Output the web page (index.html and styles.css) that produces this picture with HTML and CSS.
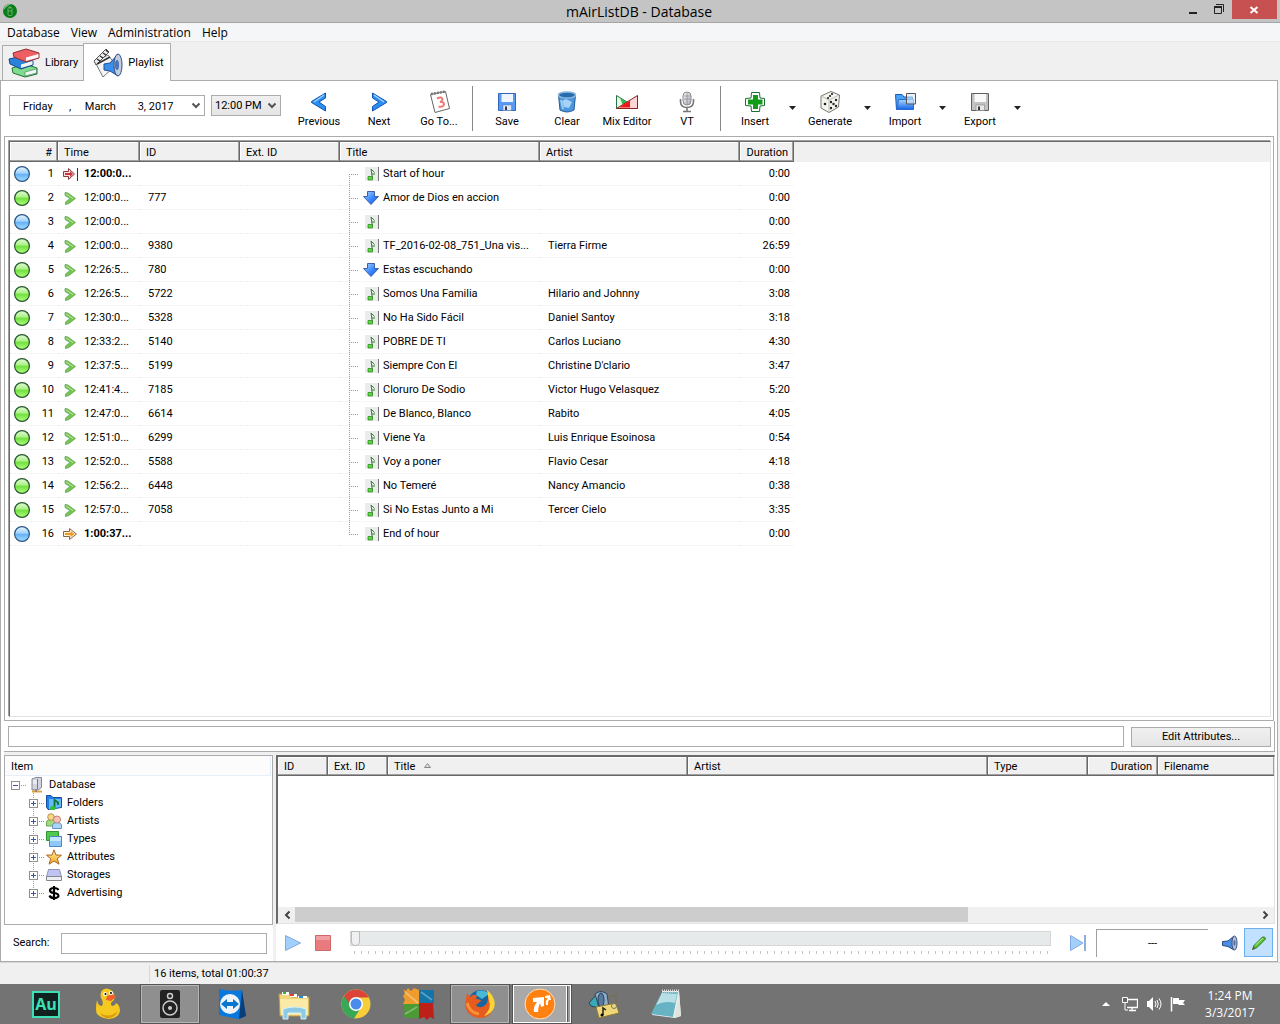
FILE: index.html
```html
<!DOCTYPE html>
<html lang="en">
<head>
    <meta charset="UTF-8">
    <meta name="viewport" content="width=device-width, initial-scale=1.0">
    <title>mAirListDB - Database</title>
    <link rel="stylesheet" href="styles.css">
</head>
<body>
    <svg class="sprite" aria-hidden="true">
        <defs>
            <linearGradient id="g-blue" x1="0" y1="0" x2="0" y2="1"><stop offset="0" stop-color="#a9d8ff"/><stop offset="1" stop-color="#1263e8"/></linearGradient>
            <linearGradient id="g-down" x1="0" y1="0" x2="1" y2="1"><stop offset="0" stop-color="#b9dcff"/><stop offset="0.5" stop-color="#3f8cff"/><stop offset="1" stop-color="#1250e0"/></linearGradient>
            <linearGradient id="g-ball-blue" x1="0" y1="0" x2="0" y2="1"><stop offset="0" stop-color="#e4f3ff"/><stop offset="0.45" stop-color="#a4d3fb"/><stop offset="0.5" stop-color="#62b0f8"/><stop offset="1" stop-color="#a6deff"/></linearGradient>
            <linearGradient id="g-ball-green" x1="0" y1="0" x2="0" y2="1"><stop offset="0" stop-color="#e2ffd2"/><stop offset="0.45" stop-color="#a9f084"/><stop offset="0.5" stop-color="#6fe03c"/><stop offset="1" stop-color="#b2ff7c"/></linearGradient>
            <linearGradient id="g-grey" x1="0" y1="0" x2="1" y2="1"><stop offset="0" stop-color="#ffffff"/><stop offset="1" stop-color="#a9abb8"/></linearGradient>
            <linearGradient id="g-gold" x1="0" y1="0" x2="0" y2="1"><stop offset="0" stop-color="#fff1a0"/><stop offset="1" stop-color="#f5a51c"/></linearGradient>
        </defs>

        <symbol id="ball-blue" viewBox="0 0 16 16"><circle cx="8" cy="8" r="7.400" fill="url(#g-ball-blue)" stroke="#2b5584" stroke-width="1.200"/></symbol>
        <symbol id="ball-green" viewBox="0 0 16 16"><circle cx="8" cy="8" r="7.400" fill="url(#g-ball-green)" stroke="#25582c" stroke-width="1.200"/></symbol>
        <symbol id="chevron" viewBox="0 0 16 16"><path d="M3 2.500L6 3 13.500 8.500 7 13.500 3.500 14.500V12L8 8.500 3 5.500Z" fill="#74c653" stroke="#69a455" stroke-width="0.800"/><path d="M4 4L11 8.500" stroke="#b9e6a5" fill="none"/></symbol>
        <symbol id="fixed" viewBox="0 0 16 16"><path d="M1.500 5.500H6.500V2.500L12.500 8 6.500 13.500V10.500H1.500Z" fill="#f8dede" stroke="#8c3a3e"/><path d="M3 7H8V5L11 8 8 11V9H3Z" fill="#c43a3e"/><path d="M15.500 2V15" stroke="#333"/></symbol>
        <symbol id="ending" viewBox="0 0 16 16"><path d="M1.500 5.500H7.500V2.500L14.500 8 7.500 13.500V10.500H1.500Z" fill="#fff1d8" stroke="#84684c"/><path d="M3 7H8.500V5L12.500 8 8.500 11V9H3Z" fill="#f09a1e"/></symbol>
        <symbol id="note" viewBox="0 0 16 16"><rect x="2" y="1" width="13" height="14" fill="#ececec"/><path d="M15.500 1V15" stroke="#777"/><path d="M9.500 12.500L8 3L11.500 6.500M8.500 8H12" stroke="#2d8433" fill="none"/><path d="M5 10.500H9.500V14H5Z" fill="#55dd2c" stroke="#287c2d" stroke-width="0.700"/></symbol>
        <symbol id="down" viewBox="0 0 16 16"><path d="M4.500 1.500H11.500V6.500H15.500L8 14.500 .5 6.500H4.500Z" fill="url(#g-down)" stroke="#3c5fae"/></symbol>
        <symbol id="branch-first" viewBox="0 0 10 24"><path d="M0 12.500H9M.5 12V24" stroke="#999" stroke-dasharray="1 1"/></symbol>
        <symbol id="branch-mid" viewBox="0 0 10 24"><path d="M0 12.500H9M.5 0V24" stroke="#999" stroke-dasharray="1 1"/></symbol>
        <symbol id="branch-last" viewBox="0 0 10 24"><path d="M0 12.500H9M.5 0V12" stroke="#999" stroke-dasharray="1 1"/></symbol>
        <symbol id="arrow-down" viewBox="0 0 10 8"><path d="M1.500 1.500L5 5 8.500 1.500" fill="none" stroke="#555" stroke-width="2"/></symbol>
        <symbol id="caret" viewBox="0 0 7 4"><path d="M0 0H7L3.500 4Z" fill="#222"/></symbol>
        <symbol id="disk" viewBox="0 0 24 24"><path d="M3.500 3.500H20.500V20.500H3.500Z" stroke="#3863bd"/><path d="M6.500 4H18V12H6.500Z" fill="#fff" opacity="0.900"/><path d="M8 15H16.500V20.500H8Z" fill="#dfe8f5" stroke="#5679ba" stroke-width="0.500"/><path d="M10 16.500H12V20H10Z" fill="#335"/></symbol>
    </svg>

    <header class="titlebar">
        <svg class="app-icon" viewBox="0 0 16 16"><circle cx="8" cy="8" r="7" fill="#087d18"/><path d="M1.500 7A7 7 0 0 1 9 1Q5 3 1.500 7Z" fill="#8bc890"/><rect x="6" y="4.500" width="4" height="8" rx="1" fill="none" stroke="#66ad6c"/><path d="M6 8H10M8 3V6" stroke="#66ad6c"/></svg>
        <h1>mAirListDB - Database</h1>
        <div class="window-buttons">
            <button class="win-btn" aria-label="Minimize"><svg viewBox="0 0 12 12"><path d="M2 9H10" stroke="#222" stroke-width="2"/></svg></button>
            <button class="win-btn" aria-label="Restore"><svg viewBox="0 0 12 12"><path d="M3 .5H10.500V8" fill="none" stroke="#222"/><path d="M1.500 3.500H8.500V9.500H1.500Z" fill="none" stroke="#222"/><path d="M1 3H9" stroke="#222" stroke-width="2"/></svg></button>
            <button class="win-btn close" aria-label="Close"><svg viewBox="0 0 12 12"><path d="M2.500 3L9.500 9M9.500 3L2.500 9" stroke="#fff" stroke-width="2"/></svg></button>
        </div>
    </header>

    <nav class="menubar">
        <button>Database</button>
        <button>View</button>
        <button>Administration</button>
        <button>Help</button>
    </nav>

    <div class="tabs" role="tablist">
        <button class="tab" role="tab" aria-selected="false">
            <svg viewBox="0 0 32 32"><path d="M4 21L17 17 29 21V27L17 30 5 26Z" fill="#7fdc8e" stroke="#23713c"/><path d="M17 25L28.500 22V26L17 29Z" fill="#f5f5f5" stroke="#23713c" stroke-width="0.500"/><path d="M1 12L14 9 25 14V18L13 22 2 17Z" fill="#2a83da" stroke="#1c4686"/><path d="M13 17.500L24.500 14V17.500L13 21Z" fill="#f5f5f5"/><path d="M5 6L18 2 31 6V11L18 15 6 10Z" fill="#ed5f63" stroke="#8e2c35"/><path d="M18 10.500L30.500 7V10.500L18 14Z" fill="#f8f8f8"/></svg>
            Library
        </button>
        <button class="tab active" role="tab" aria-selected="true">
            <svg viewBox="0 0 32 32"><path d="M3 15L16 8 24 18 11 30Z" fill="#f4f4f4" stroke="#777"/><path d="M2 14L14 2 17 5 4 18Z" fill="#eee" stroke="#555"/><path d="M5 12L8 14M8 9L11 11M11 6L14 8M14 3L16 5M5 17L18 10" stroke="#333" stroke-width="1.500"/><path d="M12 17L18 16 26 7V29L18 24 12 23Z" fill="#3b8fec" stroke="#234f94"/><ellipse cx="26" cy="18" rx="4" ry="11" fill="#c3cddd" stroke="#31528c"/><ellipse cx="25" cy="18" rx="2" ry="5" fill="#4974b5"/></svg>
            Playlist
        </button>
    </div>

    <main class="page">
        <div class="toolbar">
            <div class="picker date">
                <input type="text" aria-label="Date" value="Friday      ,     March        3, 2017">
                <svg><use href="#arrow-down"/></svg>
            </div>
            <div class="picker hour">
                <select aria-label="Hour"><option>12:00 PM</option></select>
                <svg><use href="#arrow-down"/></svg>
            </div>
            <button class="tool"><svg viewBox="0 0 24 24"><path d="M18.500 3V8L12 12 18.500 16.500V21L4.500 12.500V11.500Z" fill="#298ff0" stroke="#1353b6"/><path d="M17 5L7 12" stroke="#9bd0ff" stroke-width="1.500"/></svg>Previous</button>
            <button class="tool"><svg viewBox="0 0 24 24"><path d="M5.500 3V8L12 12 5.500 16.500V21L19.500 12.500V11.500Z" fill="#298ff0" stroke="#1353b6"/><path d="M7 5L17 12" stroke="#9bd0ff" stroke-width="1.500"/></svg>Next</button>
            <button class="tool"><svg viewBox="0 0 24 24"><path d="M3.500 4.500L18.500 1.500 22.500 18.500 8 22.500Z" fill="#fff" stroke="#666"/><path d="M4 4L18.500 1.500" stroke="#777" stroke-width="2.500" stroke-dasharray="2 1"/><path d="M10 8.500Q15 6 15.500 9.500 15 11.500 13 12 17 11.500 17 14.500 16 17.500 11.500 16.500" fill="none" stroke="#f07870" stroke-width="2"/></svg>Go To...</button>
            <span class="sep"></span>
            <button class="tool"><svg viewBox="0 0 24 24" fill="#559bf1"><use href="#disk"/></svg>Save</button>
            <button class="tool"><svg viewBox="0 0 24 24"><path d="M3.500 5L5 20Q12 24 19 20L20.500 5Z" fill="#4b96dc" stroke="#255b9c"/><ellipse cx="12" cy="5" rx="8.500" ry="3" fill="#266cae" stroke="#8cb7dc" stroke-width="1.500"/><path d="M7 11L11 9 17 12 14 18 9 17Z" fill="#a5d2f6"/><path d="M6 10L8 19" stroke="#9ccaf0" stroke-width="2"/></svg>Clear</button>
            <button class="tool"><svg viewBox="0 0 24 24"><path d="M1.500 5.500L22.500 18.500H1.500Z" fill="#e8f8e8" stroke="#267443"/><path d="M5 8L12 12 9 18Z" fill="#31b64b"/><path d="M22.500 5.500V18.500H1.500Z" fill="#ffd6d6" stroke="#8b2020"/><path d="M4 17.500L15 10.500V17.500Z" fill="#f01616"/></svg>Mix Editor</button>
            <button class="tool"><svg viewBox="0 0 24 24"><rect x="8" y="2" width="8" height="13" rx="4" fill="url(#g-grey)" stroke="#888"/><path d="M9 6H15M9 9H15M12 3V14" stroke="#888" stroke-width="0.700"/><path d="M5.500 9V12Q6 17.500 12 17.500 18 17.500 18.500 12V9M12 18V21M8 21.500H16" fill="none" stroke="#777" stroke-width="1.600"/></svg>VT</button>
            <span class="sep"></span>
            <button class="tool"><svg viewBox="0 0 24 24"><path d="M8.500 2.500H16.500L17 8 21.500 8.500V15.500L17 16 16.500 21.500H8.500L8 16 2.500 15.500V8.500L8 8Z" fill="#fff" stroke="#1b7036"/><path d="M10 5H15V9.500H19.500V14.500H15V19H10V14.500H5V9.500H10Z" fill="#129b17"/></svg>Insert</button>
            <button class="more" aria-label="Insert options"><svg><use href="#caret"/></svg></button>
            <button class="tool"><svg viewBox="0 0 24 24"><path d="M13 1.500L21.500 5 20.500 17 11 22.500 3 18V6Z" fill="#f5f5ee" stroke="#777"/><path d="M3 6L11 10 21 5M11 10V22" fill="none" stroke="#bbb"/><g fill="#222"><circle cx="14" cy="4" r="1.100"/><circle cx="12" cy="6" r="1.100"/><circle cx="10" cy="8" r="1.100"/><circle cx="7" cy="14" r="1.300"/><circle cx="13" cy="12" r="1.200"/><circle cx="18" cy="10" r="1.200"/><circle cx="15.500" cy="14" r="1.200"/><circle cx="13" cy="18" r="1.200"/><circle cx="18" cy="16" r="1.200"/></g></svg>Generate</button>
            <button class="more" aria-label="Generate options"><svg><use href="#caret"/></svg></button>
            <button class="tool"><svg viewBox="0 0 24 24"><path d="M2.500 4.500H9L11 7H19.500V19.500H3.500Z" fill="#4ba4f5" stroke="#1959be"/><path d="M5.500 9.500H20.500V19.500H4Z" fill="url(#g-blue)" stroke="#2b6bcb"/><path d="M13.500 3.500H22.500V14H13.500Z" fill="#d9e9fa" fill-opacity="0.600" stroke="#555"/></svg>Import</button>
            <button class="more" aria-label="Import options"><svg><use href="#caret"/></svg></button>
            <button class="tool"><svg class="grey" viewBox="0 0 24 24" fill="#c0c2cc"><use href="#disk"/></svg>Export</button>
            <button class="more" aria-label="Export options"><svg><use href="#caret"/></svg></button>
        </div>

        <section class="playlist">
            <div class="list-frame">
                <table class="tracks">
                    <colgroup><col class="c-num"><col class="c-time"><col class="c-id"><col class="c-id"><col class="c-text"><col class="c-text"><col class="c-dur"><col></colgroup>
                    <thead>
                        <tr><th class="right">#</th><th>Time</th><th>ID</th><th>Ext. ID</th><th>Title</th><th>Artist</th><th class="right">Duration</th><td></td></tr>
                    </thead>
                    <tbody id="tracks"></tbody>
                </table>
            </div>
        </section>

        <div class="attributes">
            <input type="text" aria-label="Attributes">
            <button>Edit Attributes...</button>
        </div>

        <div class="browser">
            <aside class="left">
                <div class="tree">
                    <div class="tree-head">Item</div>
                    <ul>
                        <li class="root"><button class="toggle" aria-label="Collapse"></button><span class="dots"></span>
                            <svg viewBox="0 0 16 16"><path d="M4 2L8 0.500H13.500V10.500L10 13H4Z" fill="#d2d4df" stroke="#858794"/><path d="M9.500 2V12" stroke="#777"/><path d="M5 4H9M5 6H9" stroke="#fff"/><path d="M4 14.500H14" stroke="#e4a542" stroke-width="2"/><path d="M8 12V15" stroke="#888" stroke-width="2"/></svg>Database</li>
                        <li><button class="toggle plus" aria-label="Expand"></button><span class="dots"></span>
                            <svg viewBox="0 0 16 16"><path d="M.5 .5H5L7 2.500H15.500V12.500L2 14.500.5 12Z" fill="#2180e4" stroke="#124e9c"/><path d="M3 4H15V12L3 14Z" fill="#64b9ff"/><path d="M8.500 13V5L12 7.500V10" fill="none" stroke="#12752a" stroke-width="1.800"/><ellipse cx="7" cy="13" rx="2.800" ry="2" fill="#30c22d"/></svg>Folders</li>
                        <li><button class="toggle plus" aria-label="Expand"></button><span class="dots"></span>
                            <svg viewBox="0 0 16 16"><path d="M.5 13V9Q1 6.500 5 6.500T9 9V13Z" fill="#9ddc7e" stroke="#6aa754"/><circle cx="5" cy="4" r="3.300" fill="#f9d886" stroke="#bb914b"/><path d="M6.500 15.500V12Q7 9.500 11 9.500T15.500 12V15.500Z" fill="#a8d5fa" stroke="#6594c6"/><circle cx="11" cy="6.500" r="3.500" fill="#f9c2b5" stroke="#c67f75"/></svg>Artists</li>
                        <li><button class="toggle plus" aria-label="Expand"></button><span class="dots"></span>
                            <svg viewBox="0 0 16 16"><path d="M.5 .5H12.500V9.500H.5Z" fill="#50c94e" stroke="#319337"/><path d="M3.500 5.500H15.500V15.500H3.500Z" fill="#8fc8f7" stroke="#4c88bf"/><path d="M4 6H15V10H4Z" fill="#c5e5ff"/></svg>Types</li>
                        <li><button class="toggle plus" aria-label="Expand"></button><span class="dots"></span>
                            <svg viewBox="0 0 16 16"><path d="M8 .8L10 6 15.500 6.200 11.300 9.700 13 15.200 8 12 3 15.200 4.700 9.700.5 6.200 6 6Z" fill="url(#g-gold)" stroke="#a96528"/></svg>Attributes</li>
                        <li><button class="toggle plus" aria-label="Expand"></button><span class="dots"></span>
                            <svg viewBox="0 0 16 16"><path d="M2.500 2.500H13.500L15.500 10H.5Z" fill="#bfc4f3" stroke="#8f93b8"/><path d="M.5 9.500H15.500V13.500H.5Z" fill="#eeeef2" stroke="#85868e"/></svg>Storages</li>
                        <li><button class="toggle plus" aria-label="Expand"></button><span class="dots"></span>
                            <svg viewBox="0 0 16 16"><path d="M12.500 5Q11.500 3 8 3 4 3 4 5.500 4 7.500 8 8 12.500 8.500 12.500 11 12 13 8 13 4.500 13 3.500 10.500M8 1V15" fill="none" stroke="#000" stroke-width="2.200"/></svg>Advertising</li>
                    </ul>
                </div>
                <div class="search">
                    <label for="search">Search:</label>
                    <input type="text" id="search">
                </div>
            </aside>

            <section class="right-pane">
                <div class="results">
                    <table class="library">
                        <colgroup><col class="l-id"><col class="l-ext"><col class="l-text"><col class="l-text"><col class="c-id"><col class="l-dur"><col></colgroup>
                        <thead>
                            <tr><th>ID</th><th>Ext. ID</th><th>Title <svg class="sort" viewBox="0 0 7 5"><path d="M3.500 .5L6.500 4.500H.5Z" fill="#ddd" stroke="#888"/></svg></th><th>Artist</th><th>Type</th><th class="right">Duration</th><th>Filename</th></tr>
                        </thead>
                    </table>
                    <div class="scrollbar">
                        <button aria-label="Scroll left"><svg viewBox="0 0 8 10"><path d="M6.500 1.500L3 5 6.500 8.500" fill="none" stroke="#444" stroke-width="2"/></svg></button>
                        <div class="scroll-track"><div class="scroll-thumb"></div></div>
                        <button aria-label="Scroll right"><svg viewBox="0 0 8 10"><path d="M1.500 1.500L5 5 1.500 8.500" fill="none" stroke="#444" stroke-width="2"/></svg></button>
                    </div>
                </div>
                <div class="player">
                    <button aria-label="Play"><svg viewBox="0 0 16 16"><path d="M.5 .5L15.500 8 .5 15.500Z" fill="#a2d0fc" stroke="#80a9e2"/></svg></button>
                    <button aria-label="Stop"><svg viewBox="0 0 16 16"><path d="M.5 .5H15.500V15.500H.5Z" fill="#e97a7e" stroke="#d0676a"/><path d="M1 1H15V5H1Z" fill="#f0a0a2"/></svg></button>
                    <div class="seek">
                        <input type="range" min="0" max="100" value="0" aria-label="Position">
                        <div class="ticks"></div>
                    </div>
                    <button aria-label="Skip to end"><svg viewBox="0 0 16 16"><path d="M.5 .5L13 8 .5 15.500Z" fill="#a2d0fc" stroke="#80a9e2"/><path d="M15 0V16" stroke="#8daed8" stroke-width="2"/></svg></button>
                    <output class="time-left">---</output>
                    <button class="speaker" aria-label="Cue output"><svg viewBox="0 0 16 16"><path d="M.5 6.500L6 6 12 1V15L6 11.500.5 10.500Z" fill="#4b8de0" stroke="#264c88"/><ellipse cx="12.500" cy="8" rx="2.500" ry="7" fill="#b5c2d6" stroke="#3c4f78"/><ellipse cx="12.500" cy="8" rx="1" ry="3" fill="#476ba8"/></svg></button>
                    <button class="edit" aria-label="Edit mode"><svg viewBox="0 0 16 16"><path d="M1.500 14.500L3 10.500 11.500 2Q14.500 1.500 14.500 4L6 12.500Z" fill="#5bc934" stroke="#2f7224"/><path d="M4.500 10L12 3" stroke="#c1f29a"/><path d="M1.500 14.500L2.500 11.500 4.500 13.500Z" fill="#654"/></svg></button>
                </div>
            </section>
        </div>
    </main>

    <div class="statusbar"><span class="panel"></span><span>16 items, total 01:00:37</span></div>

    <footer class="taskbar">
        <button class="task" aria-label="Audition"><span class="au">Au</span></button>
        <button class="task" aria-label="Cyberduck"><svg viewBox="0 0 32 32"><path d="M5 12Q3 22 5 26 10 31 17 31 27 30 28 23 28 17 24 15 23 18 20 18 17 15 22 12 24 2 15 .5 7 1 9 10 12 14 10 18 6 18 5 12Z" fill="#f5c91f"/><path d="M8 25Q17 31 26 23 22 31 15 30 10 29 8 25Z" fill="#d89c10"/><path d="M15 8L21 6 24 9 19 13 14 12Z" fill="#f0622a"/><circle cx="13" cy="6" r="2" fill="#fff"/><circle cx="19" cy="5" r="2" fill="#fff"/><circle cx="13.500" cy="6" r="1"/><circle cx="19" cy="5" r="1"/></svg></button>
        <button class="task open" aria-label="mAirList"><svg viewBox="0 0 32 32"><rect x="6" y="2" width="20" height="28" rx="2" fill="#222"/><g fill="none" stroke="#ccc" stroke-width="1.500"><circle cx="16" cy="8" r="2.500"/><circle cx="16" cy="20" r="7"/></g><circle cx="16" cy="20" r="2" fill="#ccc"/></svg></button>
        <button class="task" aria-label="TeamViewer"><svg viewBox="0 0 32 32"><path d="M3 1Q15 4 26 2L28 29 22 31 3 27Z" fill="#0878dc"/><path d="M26 2L30 28 23 31Z" fill="#0b3d77"/><circle cx="14" cy="16" r="10" fill="#edf3f9"/><path d="M5 16L11 11V14H17V11L23 16 17 21V18H11V21Z" fill="#0876cf"/></svg></button>
        <button class="task" aria-label="File Explorer"><svg viewBox="0 0 32 32"><path d="M1 6H11L13 9H31V28H2Z" fill="#f2d77a" stroke="#bc9642"/><path d="M4 4H11V7H4ZM12 6H19V9H12ZM20 8H29V10H20Z" fill="#fff"/><path d="M5 4H8V6H5Z" fill="#38b92c"/><path d="M12 6H16V8H12Z" fill="#dc4232"/><path d="M21 8H25V10H21Z" fill="#248dde"/><path d="M2 11H30V27H3Z" fill="#fbeaa7"/><path d="M5 31V21Q17 17 28 21V31H23V25H10V31Z" fill="#8cc9e5" stroke="#d6f2fc"/></svg></button>
        <button class="task" aria-label="Chrome"><svg viewBox="0 0 32 32"><circle cx="16" cy="16" r="14.500" fill="#f8cd3a"/><path d="M16 16L4 8A14.500 14.500 0 0 0 14 30.500L22 18Z" fill="#38a756"/><path d="M16 16H10L4 8A14.500 14.500 0 0 1 29 9.500H16Z" fill="#db4437"/><circle cx="16" cy="16" r="7" fill="#fff"/><circle cx="16" cy="16" r="5.500" fill="#4a8bec"/></svg></button>
        <button class="task" aria-label="AVG"><svg viewBox="0 0 32 32"><path d="M1 1L4 3 6 0 9 3 12 0 17 2V16H1L3 12 1 8 3 5Z" fill="#ef9c2c"/><path d="M17 2H32V15H17Z" fill="#1274a9"/><path d="M1 16H18V30H4L1 27 3 24Z" fill="#4b9a35"/><path d="M17 15H31L32 31 28 29 25 32 22 29 17 31Z" fill="#bd2018"/><path d="M3 4L16 15M19 4L30 12M3 26L15 19" stroke="#ffffff" stroke-opacity="0.300" stroke-width="2"/></svg></button>
        <button class="task open" aria-label="Firefox"><svg viewBox="0 0 32 32"><circle cx="17" cy="15" r="13" fill="#17659f"/><path d="M13 3Q21 1 25 6L18 11 12 7Z" fill="#4ab9d9"/><path d="M3 5L6 9Q10 5 13 8L12 11Q17 11 17 13L12 17Q15 21 20 18 25 15 24 7 31 12 30 19 26 31 15 30 2 28 1 16Z" fill="#e65c20"/><path d="M23 2Q33 10 30 20 27 26 20 28 28 20 25 13Z" fill="#fbd435"/><path d="M3 15Q6 25 15 26" stroke="#f59236" stroke-width="3" fill="none"/></svg></button>
        <button class="task open current" aria-label="mAirListDB"><svg viewBox="0 0 32 32"><circle cx="16" cy="16" r="15" fill="#ff8111" stroke="#ffe0bd"/><path d="M9 10L20 9 20 18 17 19 16 15Q14 19 14 24L10 24Q9 19 13 14L9 14Z" fill="#fff"/><path d="M21 8L26 7 27 12 25 12Q23 14 24 17L22 17Q21 13 24 10L21 10Z" fill="#fff"/></svg></button>
        <button class="task" aria-label="Audio tagger"><svg viewBox="0 0 32 32"><path d="M1 15L8 7 11 20 3 18Z" fill="#38a9b6" stroke="#254853"/><path d="M7 6Q13 1 19 6L21 20 12 22Z" fill="#91adc4" stroke="#304864"/><ellipse cx="13" cy="12" rx="3" ry="7" fill="#56799f" stroke="#263f5d"/><path d="M8 19L28 15 31 25 11 30Z" fill="#efd779" stroke="#8c7734"/><path d="M15 27V20L18 22" fill="none" stroke="#222" stroke-width="1.500"/><circle cx="14" cy="27" r="1.500"/><circle cx="26" cy="18" r="2.500" fill="none" stroke="#777"/><path d="M21 9L28 7V16" fill="none" stroke="#786d32" stroke-dasharray="2 1"/></svg></button>
        <button class="task" aria-label="Notepad"><svg viewBox="0 0 32 32"><path d="M13 3H29L31 28 25 30 2 27Z" fill="#eaf3f5"/><path d="M12 4H28L23 29 1 26Z" fill="#67b3c4"/><path d="M12 5L27 6 25 15Q15 12 6 17Z" fill="#b9dfe6"/><path d="M29 4L31 28 24 30Z" fill="#e1e4dd"/><path d="M12 3H29" stroke="#ddd" stroke-width="3" stroke-dasharray="1 1"/></svg></button>
        <div class="tray">
            <svg viewBox="0 0 16 16"><path d="M4 10L8 6 12 10Z" fill="#fff"/></svg>
            <svg viewBox="0 0 16 16"><path d="M5 3.500H15.500V11.500H5M10 12V14M7 14.500H14" fill="none" stroke="#fff" stroke-width="1.300"/><path d="M.5 1.500H5.500V6.500H.5ZM3 7V14H6" fill="#666" stroke="#fff"/></svg>
            <svg viewBox="0 0 16 16"><path d="M1 5H3L7 1V15L3 11H1Z" fill="#fff"/><path d="M9 5Q11 8 9 11M11 4Q13.500 8 11 12M13 2.500Q17 8 13 13.500" fill="none" stroke="#fff"/></svg>
            <svg viewBox="0 0 16 16"><path d="M1.500 1V15.500" stroke="#fff" stroke-width="1.500"/><path d="M3 2H9V4H15L13 7 15 9H9L8 8H3Z" fill="#fff"/></svg>
        </div>
        <div class="clock"><time>1:24 PM</time><time>3/3/2017</time></div>
    </footer>

    <script>
        // ball, start icon, time, id, title icon, title, artist, duration
        const tracks = [
            ['blue', 'fixed', '12:00:0...', '', 'note', 'Start of hour', '', '0:00'],
            ['green', 'chevron', '12:00:0...', '777', 'down', 'Amor de Dios en accion', '', '0:00'],
            ['blue', 'chevron', '12:00:0...', '', 'note', '', '', '0:00'],
            ['green', 'chevron', '12:00:0...', '9380', 'note', 'TF_2016-02-08_751_Una vis...', 'Tierra Firme', '26:59'],
            ['green', 'chevron', '12:26:5...', '780', 'down', 'Estas escuchando', '', '0:00'],
            ['green', 'chevron', '12:26:5...', '5722', 'note', 'Somos Una Familia', 'Hilario and Johnny', '3:08'],
            ['green', 'chevron', '12:30:0...', '5328', 'note', 'No Ha Sido Fácil', 'Daniel Santoy', '3:18'],
            ['green', 'chevron', '12:33:2...', '5140', 'note', 'POBRE DE TI', 'Carlos Luciano', '4:30'],
            ['green', 'chevron', '12:37:5...', '5199', 'note', 'Siempre Con El', "Christine D'clario", '3:47'],
            ['green', 'chevron', '12:41:4...', '7185', 'note', 'Cloruro De Sodio', 'Victor Hugo Velasquez', '5:20'],
            ['green', 'chevron', '12:47:0...', '6614', 'note', 'De Blanco, Blanco', 'Rabito', '4:05'],
            ['green', 'chevron', '12:51:0...', '6299', 'note', 'Viene Ya', 'Luis Enrique Esoinosa', '0:54'],
            ['green', 'chevron', '12:52:0...', '5588', 'note', 'Voy a poner', 'Flavio Cesar', '4:18'],
            ['green', 'chevron', '12:56:2...', '6448', 'note', 'No Temeré', 'Nancy Amancio', '0:38'],
            ['green', 'chevron', '12:57:0...', '7058', 'note', 'Si No Estas Junto a Mi', 'Tercer Cielo', '3:35'],
            ['blue', 'ending', '1:00:37...', '', 'note', 'End of hour', '', '0:00']
        ];

        const icon = (name, cls = 'icon') => `<svg class="${cls}"><use href="#${name}"/></svg>`;

        document.getElementById('tracks').innerHTML = tracks.map((t, i) => {
            const branch = i === 0 ? 'first' : i === tracks.length - 1 ? 'last' : 'mid';
            const bold = t[1] === 'chevron' ? '' : ' bold';
            return `<tr>
                <td><div class="num">${icon('ball-' + t[0])}<span>${i + 1}</span></div></td>
                <td><div class="start${bold}">${icon(t[1])}<span>${t[2]}</span></div></td>
                <td>${t[3]}</td>
                <td></td>
                <td><div class="title">${icon('branch-' + branch, 'branch')}${icon(t[4])}<span>${t[5]}</span></div></td>
                <td>${t[6]}</td>
                <td class="right">${t[7]}</td>
            </tr>`;
        }).join('');
    </script>
</body>
</html>
```
FILE: styles.css
```css
* {
    box-sizing: border-box;
}

body {
    margin: 0;
    min-height: 100vh;
    display: flex;
    flex-direction: column;
    background-color: #f0f0f0;
    color: #000;
    font-family: Tahoma, Roboto, sans-serif;
    font-size: 11px;
    line-height: 14px;
}

button, input, select {
    font: inherit;
    color: inherit;
    margin: 0;
    padding: 0;
    border: none;
    border-radius: 0;
    background: none;
}

svg {
    display: block;
    flex: none;
}

.sprite {
    position: absolute;
    width: 0;
    height: 0;
}

/* title bar and menu */
.titlebar {
    height: 23px;
    display: flex;
    justify-content: space-between;
    background-color: #c4c4c4;
    border-bottom: 1px solid #a5a5a5;
}

.app-icon {
    width: 16px;
    height: 16px;
    margin: 3px 80px 0 2px;
}

.titlebar h1 {
    margin: 0;
    font-family: "Segoe UI", "Open Sans", sans-serif;
    font-size: 14px;
    font-weight: normal;
    line-height: 23px;
}

.window-buttons {
    display: flex;
    padding-right: 3px;
}

.win-btn {
    width: 26px;
    height: 19px;
    display: flex;
    justify-content: center;
    align-items: center;
}

.win-btn svg {
    width: 12px;
    height: 12px;
}

.win-btn.close {
    width: 45px;
    background-color: #c75050;
}

.menubar {
    height: 19px;
    display: flex;
    gap: 11px;
    padding: 1px 0 0 7px;
    background-color: #f5f6f7;
    border-bottom: 1px solid #e8e8e8;
    font-family: "Segoe UI", "Open Sans", sans-serif;
    font-size: 12px;
}

/* tabs */
.tabs {
    height: 38px;
    display: flex;
    align-items: flex-end;
    padding-left: 2px;
}

.tab {
    height: 35px;
    display: flex;
    align-items: center;
    gap: 5px;
    padding: 0 5px;
    border: 1px solid #acacac;
    border-bottom: none;
    background-color: #f0f0f0;
}

.tab svg {
    width: 32px;
    height: 32px;
}

.tab.active {
    height: 38px;
    gap: 4px;
    margin: 0 0 -1px -1px;
    padding: 0 6px 0 8px;
    background-color: #fff;
    z-index: 1;
}

.page {
    flex: 1;
    display: flex;
    flex-direction: column;
    margin-right: 2px;
    padding: 0 2px 0 3px;
    border: 1px solid #acacac;
    background-color: #fff;
}

/* toolbar */
.toolbar {
    height: 55px;
    display: flex;
    padding: 5px;
}

.picker {
    position: relative;
    height: 21px;
    margin: 9px 6px 0 0;
    border: 1px solid #acacac;
}

.picker.date {
    width: 196px;
}

.picker.hour {
    width: 70px;
    margin-right: 8px;
    background: linear-gradient(#f0f0f0, #e5e5e5);
}

.picker input {
    width: 174px;
    height: 19px;
    padding: 1px 0 0 13px;
    white-space: pre;
}

.picker select {
    width: 100%;
    height: 19px;
    padding: 1px 0 0 3px;
    appearance: none;
}

.picker svg {
    position: absolute;
    right: 3px;
    top: 6px;
    width: 10px;
    height: 8px;
    pointer-events: none;
}

.tool {
    width: 60px;
    height: 44px;
    display: flex;
    flex-direction: column;
    align-items: center;
    gap: 1px;
    padding-top: 4px;
}

.tool svg {
    width: 24px;
    height: 24px;
}

.tool .grey {
    filter: grayscale(1);
}

.more {
    width: 15px;
    height: 44px;
    display: flex;
    justify-content: center;
    align-items: center;
}

.more svg {
    width: 7px;
    height: 4px;
}

.sep {
    width: 1px;
    margin: 0 4px 0 3px;
    background-color: #888;
}

/* playlist */
.playlist {
    flex: 1;
    display: flex;
    padding: 4px 2px 3px 4px;
    border: 1px solid #acacac;
    margin-right: 1px;
}

.list-frame {
    flex: 1;
    border: 1px solid #e3e3e3;
    border-top-color: #696969;
    border-left-color: #696969;
    box-shadow: -1px -1px #a0a0a0;
}

table {
    width: 100%;
    table-layout: fixed;
    border-collapse: separate;
    border-spacing: 0;
}

.c-num { width: 48px; }
.c-time { width: 82px; }
.c-id { width: 100px; }
.c-text { width: 200px; }
.c-dur { width: 54px; }
.l-id { width: 50px; }
.l-ext { width: 60px; }
.l-text { width: 300px; }
.l-dur { width: 70px; }

th, thead td {
    height: 20px;
    padding: 2px 5px 0 6px;
    background-color: #f0f0f0;
    text-align: left;
    font-weight: normal;
    white-space: nowrap;
}

th {
    border-right: 1px solid #696969;
    border-bottom: 1px solid #696969;
    box-shadow: inset -1px -1px #a0a0a0, inset 1px 1px #fff;
}

tbody td {
    height: 24px;
    padding: 0 4px 0 8px;
    border-bottom: 1px dotted #ececec;
    white-space: nowrap;
}

.right {
    text-align: right;
}

.icon {
    width: 16px;
    height: 16px;
}

.num, .start, .title {
    display: flex;
    align-items: center;
    height: 23px;
}

.num {
    justify-content: space-between;
    margin-left: -4px;
}

.start {
    gap: 6px;
    margin-left: -4px;
}

.start.bold {
    font-weight: bold;
}

.title {
    gap: 4px;
}

.branch {
    width: 10px;
    height: 24px;
    margin-left: 1px;
}

/* attributes */
.attributes {
    height: 31px;
    display: flex;
    align-items: center;
    gap: 7px;
    padding: 1px 3px 0 4px;
    border: 1px solid #acacac;
    border-width: 0 1px 1px 0;
}

.attributes input {
    flex: 1;
    height: 21px;
    border: 1px solid #acacac;
}

.attributes button {
    width: 140px;
    height: 20px;
    border: 1px solid #acacac;
    background: linear-gradient(#f0f0f0, #e5e5e5);
}

/* library browser */
.browser {
    display: flex;
    gap: 3px;
    padding-top: 3px;
    background-color: #f0f0f0;
}

.left {
    width: 269px;
    background-color: #fff;
}

.tree {
    height: 170px;
    border: 1px solid #acacac;
}

.tree-head {
    height: 20px;
    margin-right: 1px;
    padding: 4px 6px 0;
    border: 1px solid #e5eefa;
    border-width: 0 1px 1px 0;
    background-color: #fcfcfc;
}

.tree ul {
    margin: 0;
    padding: 0 0 0 24px;
    list-style: none;
}

.tree li {
    position: relative;
    height: 18px;
    display: flex;
    align-items: center;
}

.tree li.root {
    margin-left: -18px;
}

.tree li svg {
    width: 16px;
    height: 16px;
    margin: 0 5px 0 2px;
}

/* dotted line that joins the expand boxes */
.tree li:not(.root)::before {
    content: "";
    position: absolute;
    left: 4px;
    top: -5px;
    height: 9px;
    border-left: 1px dotted #999;
}

.dots {
    width: 5px;
    border-top: 1px dotted #999;
    margin-left: 1px;
}

.toggle {
    width: 9px;
    height: 9px;
    border: 1px solid #919191;
    background: linear-gradient(#3c56a4, #3c56a4) center / 5px 1px no-repeat;
}

.toggle.plus {
    background: linear-gradient(#3c56a4, #3c56a4) center / 5px 1px no-repeat, linear-gradient(#3c56a4, #3c56a4) center / 1px 5px no-repeat;
}

.search {
    display: flex;
    align-items: center;
    gap: 12px;
    height: 36px;
    padding: 0 6px 0 9px;
}

.search input {
    flex: 1;
    height: 21px;
    border: 1px solid #acacac;
}

.right-pane {
    flex: 1;
    min-width: 0;
    background-color: #fff;
}

.results {
    height: 169px;
    display: flex;
    flex-direction: column;
    justify-content: space-between;
    border: 1px solid #e3e3e3;
    border-top: 2px solid #696969;
    border-left: 2px solid #696969;
}

.library th {
    height: 19px;
}

.library th:last-child {
    border-right: none;
}

.sort {
    display: inline-block;
    width: 7px;
    height: 5px;
    margin: 0 0 2px 6px;
}

.scrollbar {
    height: 16px;
    display: flex;
    background-color: #f0f0f0;
}

.scrollbar button {
    width: 17px;
    display: flex;
    justify-content: center;
    align-items: center;
}

.scrollbar svg {
    width: 8px;
    height: 10px;
}

.scroll-track {
    flex: 1;
}

.scroll-thumb {
    width: 70%;
    height: 15px;
    background-color: #cdcdcd;
}

.player {
    height: 37px;
    display: flex;
    align-items: center;
    padding: 0 2px 0 9px;
}

.player > button {
    width: 16px;
    height: 16px;
    margin-right: 14px;
}

.player svg {
    width: 16px;
    height: 16px;
}

.seek {
    flex: 1;
    height: 24px;
    margin: 0 19px 0 5px;
}

.seek input {
    display: block;
    width: 100%;
    height: 15px;
    appearance: none;
    background-color: #e7eaea;
    border: 1px solid #d6d6d6;
}

.seek input::-webkit-slider-thumb {
    appearance: none;
    width: 9px;
    height: 15px;
    background-color: #f0f0f0;
    border: 1px solid #bbb;
    border-radius: 1px 1px 5px 5px;
}

.ticks {
    height: 3px;
    margin: 5px 2px 0 4px;
    background: repeating-linear-gradient(90deg, #c4c4c4 0 1px, transparent 1px 7px);
}

.time-left {
    width: 112px;
    height: 28px;
    border: 1px solid #a0a0a0;
    border-width: 1px 0 0 1px;
    margin: 0 14px 0 -4px;
    line-height: 28px;
    text-align: center;
}

.player .speaker {
    margin-right: 6px;
}

.player .edit {
    width: 29px;
    height: 29px;
    display: flex;
    justify-content: center;
    align-items: center;
    margin-right: 0;
    border: 1px solid #6cb0f0;
    background-color: #c2e0ff;
}

/* status bar and taskbar */
.statusbar {
    height: 22px;
    display: flex;
    align-items: center;
    gap: 4px;
    padding-top: 1px;
    border-top: 1px solid #d7d7d7;
}

.statusbar .panel {
    width: 150px;
    height: 18px;
    border-right: 1px solid #d7d7d7;
}

.taskbar {
    height: 40px;
    display: flex;
    align-items: center;
    gap: 4px;
    padding-left: 17px;
    background-color: #737373;
    color: #fff;
}

.task {
    width: 58px;
    height: 38px;
    display: flex;
    justify-content: center;
    align-items: center;
}

.task svg {
    width: 32px;
    height: 32px;
}

.task.open {
    border: 1px solid #b5b5b5;
    background-color: #8f8f8f;
    outline: 1px solid #555;
}

.task.current {
    border-color: #fff;
    padding-right: 4px;
    background: linear-gradient(90deg, #a9a9a9 52px, #fff 52px 53px, #555 53px 54px, #999 54px);
}

.au {
    width: 28px;
    height: 27px;
    border: 2px solid #3be0b4;
    background-color: #10211f;
    color: #3be0b4;
    font-family: "Open Sans", sans-serif;
    font-size: 16px;
    font-weight: bold;
    line-height: 23px;
}

.tray {
    display: flex;
    align-items: center;
    gap: 8px;
    margin-left: auto;
}

.tray svg {
    width: 16px;
    height: 16px;
}

.clock {
    width: 90px;
    padding-right: 10px;
    text-align: center;
    font-family: "Segoe UI", "Open Sans", sans-serif;
    font-size: 12px;
    line-height: 17px;
}

.clock time {
    display: block;
}
```
